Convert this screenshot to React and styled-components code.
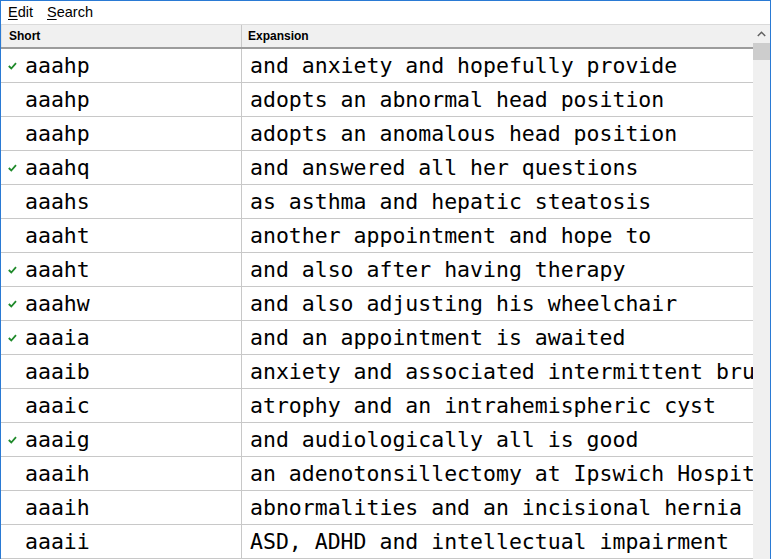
import React from 'react';
import styled, { createGlobalStyle } from 'styled-components';

const GlobalStyle = createGlobalStyle`
    html, body {
        margin: 0;
        padding: 0;
        background: #fff;
        overflow: hidden;
    }
`;

const Window = styled.div`
    width: 771px;
    height: 559px;
    box-sizing: border-box;
    border: 1px solid #2a7ad4;
    border-bottom: none;
    display: flex;
    flex-direction: column;
    overflow: hidden;
    background: #fff;
`;

const MenuBar = styled.div`
    height: 23px;
    display: flex;
    align-items: center;
    padding-left: 0;
    font-family: "Liberation Sans", Arial, sans-serif;
    font-size: 14.5px;
    color: #000;
`;

const MenuItem = styled.span`
    padding: 0 7px;
    line-height: 23px;

    u {
        text-decoration-thickness: 1px;
        text-underline-offset: 2px;
    }
`;

const ListView = styled.div`
    flex: 1;
    display: flex;
    border-top: 1px solid #dadada;
    min-height: 0;
`;

const ListBody = styled.div`
    flex: 1;
    min-width: 0;
    overflow: hidden;
`;

const Header = styled.div`
    display: flex;
    height: 22px;
    background: #f0f0f0;
    border-bottom: 2px solid #9c9c9c;
    font-family: "Liberation Sans", Arial, sans-serif;
    font-size: 12px;
    font-weight: bold;
    color: #000;
`;

const HeaderCell = styled.div`
    width: ${p => p.$width ? `${p.$width}px` : 'auto'};
    flex: ${p => p.$width ? 'none' : 1};
    box-sizing: border-box;
    display: flex;
    align-items: center;
    padding-left: ${p => p.$pad}px;
    border-right: ${p => p.$width ? '1px solid #c8c8c8' : 'none'};
    border-left: ${p => p.$first ? '1px solid #e3e3e3' : 'none'};
`;

const Row = styled.div`
    display: flex;
    height: 34px;
    box-sizing: border-box;
    border-bottom: 1px solid #c8c8c8;
    font-family: "DejaVu Sans Mono", "Liberation Mono", monospace;
    font-size: 21.5px;
    color: #000;
    white-space: nowrap;
`;

const ShortCell = styled.div`
    width: 241px;
    flex: none;
    box-sizing: border-box;
    border-right: 1px solid #c8c8c8;
    display: flex;
    align-items: center;
    padding-left: 7px;
`;

const CheckSlot = styled.span`
    width: 17px;
    flex: none;
    display: flex;
    align-items: center;
`;

const ExpansionCell = styled.div`
    flex: 1;
    min-width: 0;
    overflow: hidden;
    display: flex;
    align-items: center;
    padding-left: 8px;
`;

const ScrollBar = styled.div`
    width: 17px;
    flex: none;
    background: #f0f0f0;
    display: flex;
    flex-direction: column;
    align-items: center;
`;

const ArrowButton = styled.div`
    height: 17px;
    width: 17px;
    display: flex;
    align-items: center;
    justify-content: center;
`;

const Thumb = styled.div`
    width: 17px;
    height: 17px;
    margin-top: 1px;
    background: #cdcdcd;
`;

const Check = () => (
    <svg width="9" height="8" viewBox="0 0 9 8">
        <path d="M0.8 4 L3.3 6.5 L8 1.2" fill="none" stroke="#1f8a2a" strokeWidth="1.8" />
    </svg>
);

const rows = [
    [true, 'aaahp', 'and anxiety and hopefully provide'],
    [false, 'aaahp', 'adopts an abnormal head position'],
    [false, 'aaahp', 'adopts an anomalous head position'],
    [true, 'aaahq', 'and answered all her questions'],
    [false, 'aaahs', 'as asthma and hepatic steatosis'],
    [false, 'aaaht', 'another appointment and hope to'],
    [true, 'aaaht', 'and also after having therapy'],
    [true, 'aaahw', 'and also adjusting his wheelchair'],
    [true, 'aaaia', 'and an appointment is awaited'],
    [false, 'aaaib', 'anxiety and associated intermittent bruising'],
    [false, 'aaaic', 'atrophy and an intrahemispheric cyst'],
    [true, 'aaaig', 'and audiologically all is good'],
    [false, 'aaaih', 'an adenotonsillectomy at Ipswich Hospital'],
    [false, 'aaaih', 'abnormalities and an incisional hernia'],
    [false, 'aaaii', 'ASD, ADHD and intellectual impairment'],
];

const App = () => {
    return (
        <>
            <GlobalStyle />
            <Window>
                <MenuBar>
                    <MenuItem><u>E</u>dit</MenuItem>
                    <MenuItem><u>S</u>earch</MenuItem>
                </MenuBar>
                <ListView>
                    <ListBody>
                        <Header>
                            <HeaderCell $width={241} $pad={7} $first>Short</HeaderCell>
                            <HeaderCell $pad={6}>Expansion</HeaderCell>
                        </Header>
                        {rows.map(([checked, short, expansion], i) => (
                            <Row key={i}>
                                <ShortCell>
                                    <CheckSlot>{checked && <Check />}</CheckSlot>
                                    {short}
                                </ShortCell>
                                <ExpansionCell>{expansion}</ExpansionCell>
                            </Row>
                        ))}
                    </ListBody>
                    <ScrollBar>
                        <ArrowButton>
                            <svg width="9" height="6" viewBox="0 0 9 6">
                                <path d="M0.8 5 L4.5 1.3 L8.2 5" fill="none" stroke="#606060" strokeWidth="1.5" />
                            </svg>
                        </ArrowButton>
                        <Thumb />
                    </ScrollBar>
                </ListView>
            </Window>
        </>
    );
};

export default App;
